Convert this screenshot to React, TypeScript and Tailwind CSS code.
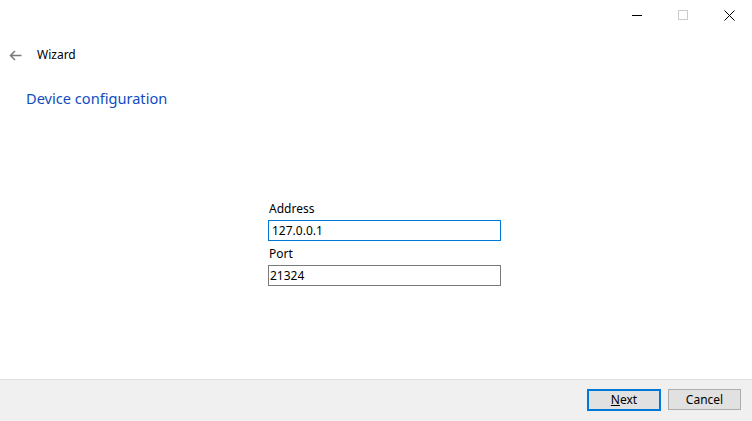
import React from 'react';

function TitleButtons() {
  return (
    <div className="flex h-[30px] justify-end">
      <div className="flex w-[46px] items-center justify-center">
        <svg width="10" height="10" viewBox="0 0 10 10">
          <path d="M0 5.5h10" stroke="#000" strokeWidth="1" />
        </svg>
      </div>
      <div className="flex w-[46px] items-center justify-center">
        <svg width="10" height="10" viewBox="0 0 10 10">
          <rect x="0.5" y="0.5" width="9" height="9" fill="none" stroke="#cccccc" strokeWidth="1" />
        </svg>
      </div>
      <div className="flex w-[46px] items-center justify-center">
        <svg width="11" height="11" viewBox="0 0 11 11">
          <path d="M0.5 0.5l10 10M10.5 0.5l-10 10" stroke="#000" strokeWidth="1" />
        </svg>
      </div>
    </div>
  );
}

export default function App() {
  return (
    <div
      className="flex h-[421px] w-[752px] flex-col bg-white text-black"
      style={{ fontFamily: '"Noto Sans", "Open Sans", sans-serif' }}
    >
      <TitleButtons />

      <div className="mt-[15px] flex h-[20px] items-center pl-[9px]">
        <svg width="13" height="11" viewBox="0 0 13 11" className="shrink-0">
          <path d="M12.5 5.5H1.5M6 1L1.5 5.5L6 10" fill="none" stroke="#7a7a7a" strokeWidth="1.5" />
        </svg>
        <span className="ml-[15px] text-[12px] leading-[16px]">Wizard</span>
      </div>

      <h1 className="mt-[23px] pl-[26px] text-[14.6px] leading-[20px] text-[#0f4cc0]">Device configuration</h1>

      <div className="mt-[93px] ml-[268px] flex w-[233px] flex-col text-[12px] leading-[16px]">
        <label className="mb-[3px] pl-px">Address</label>
        <div className="flex h-[21px] items-center border border-[#0078d7] pl-[3px]">127.0.0.1</div>
        <label className="mb-[3px] mt-[5px] pl-px">Port</label>
        <div className="flex h-[21px] items-center border border-[#7a7a7a] pl-[1px]">21324</div>
      </div>

      <div className="mt-auto flex h-[42px] items-start justify-end gap-[7px] border-t border-[#dfdfdf] bg-[#f0f0f0] pr-[11px] pt-[9px]">
        <button className="h-[22px] w-[74px] border-2 border-[#0078d7] bg-[#e1e1e1] text-[12px] leading-none">
          <span className="underline">N</span>ext
        </button>
        <button className="h-[21px] w-[73px] border border-[#adadad] bg-[#e1e1e1] text-[12px] leading-none">
          Cancel
        </button>
      </div>
    </div>
  );
}
